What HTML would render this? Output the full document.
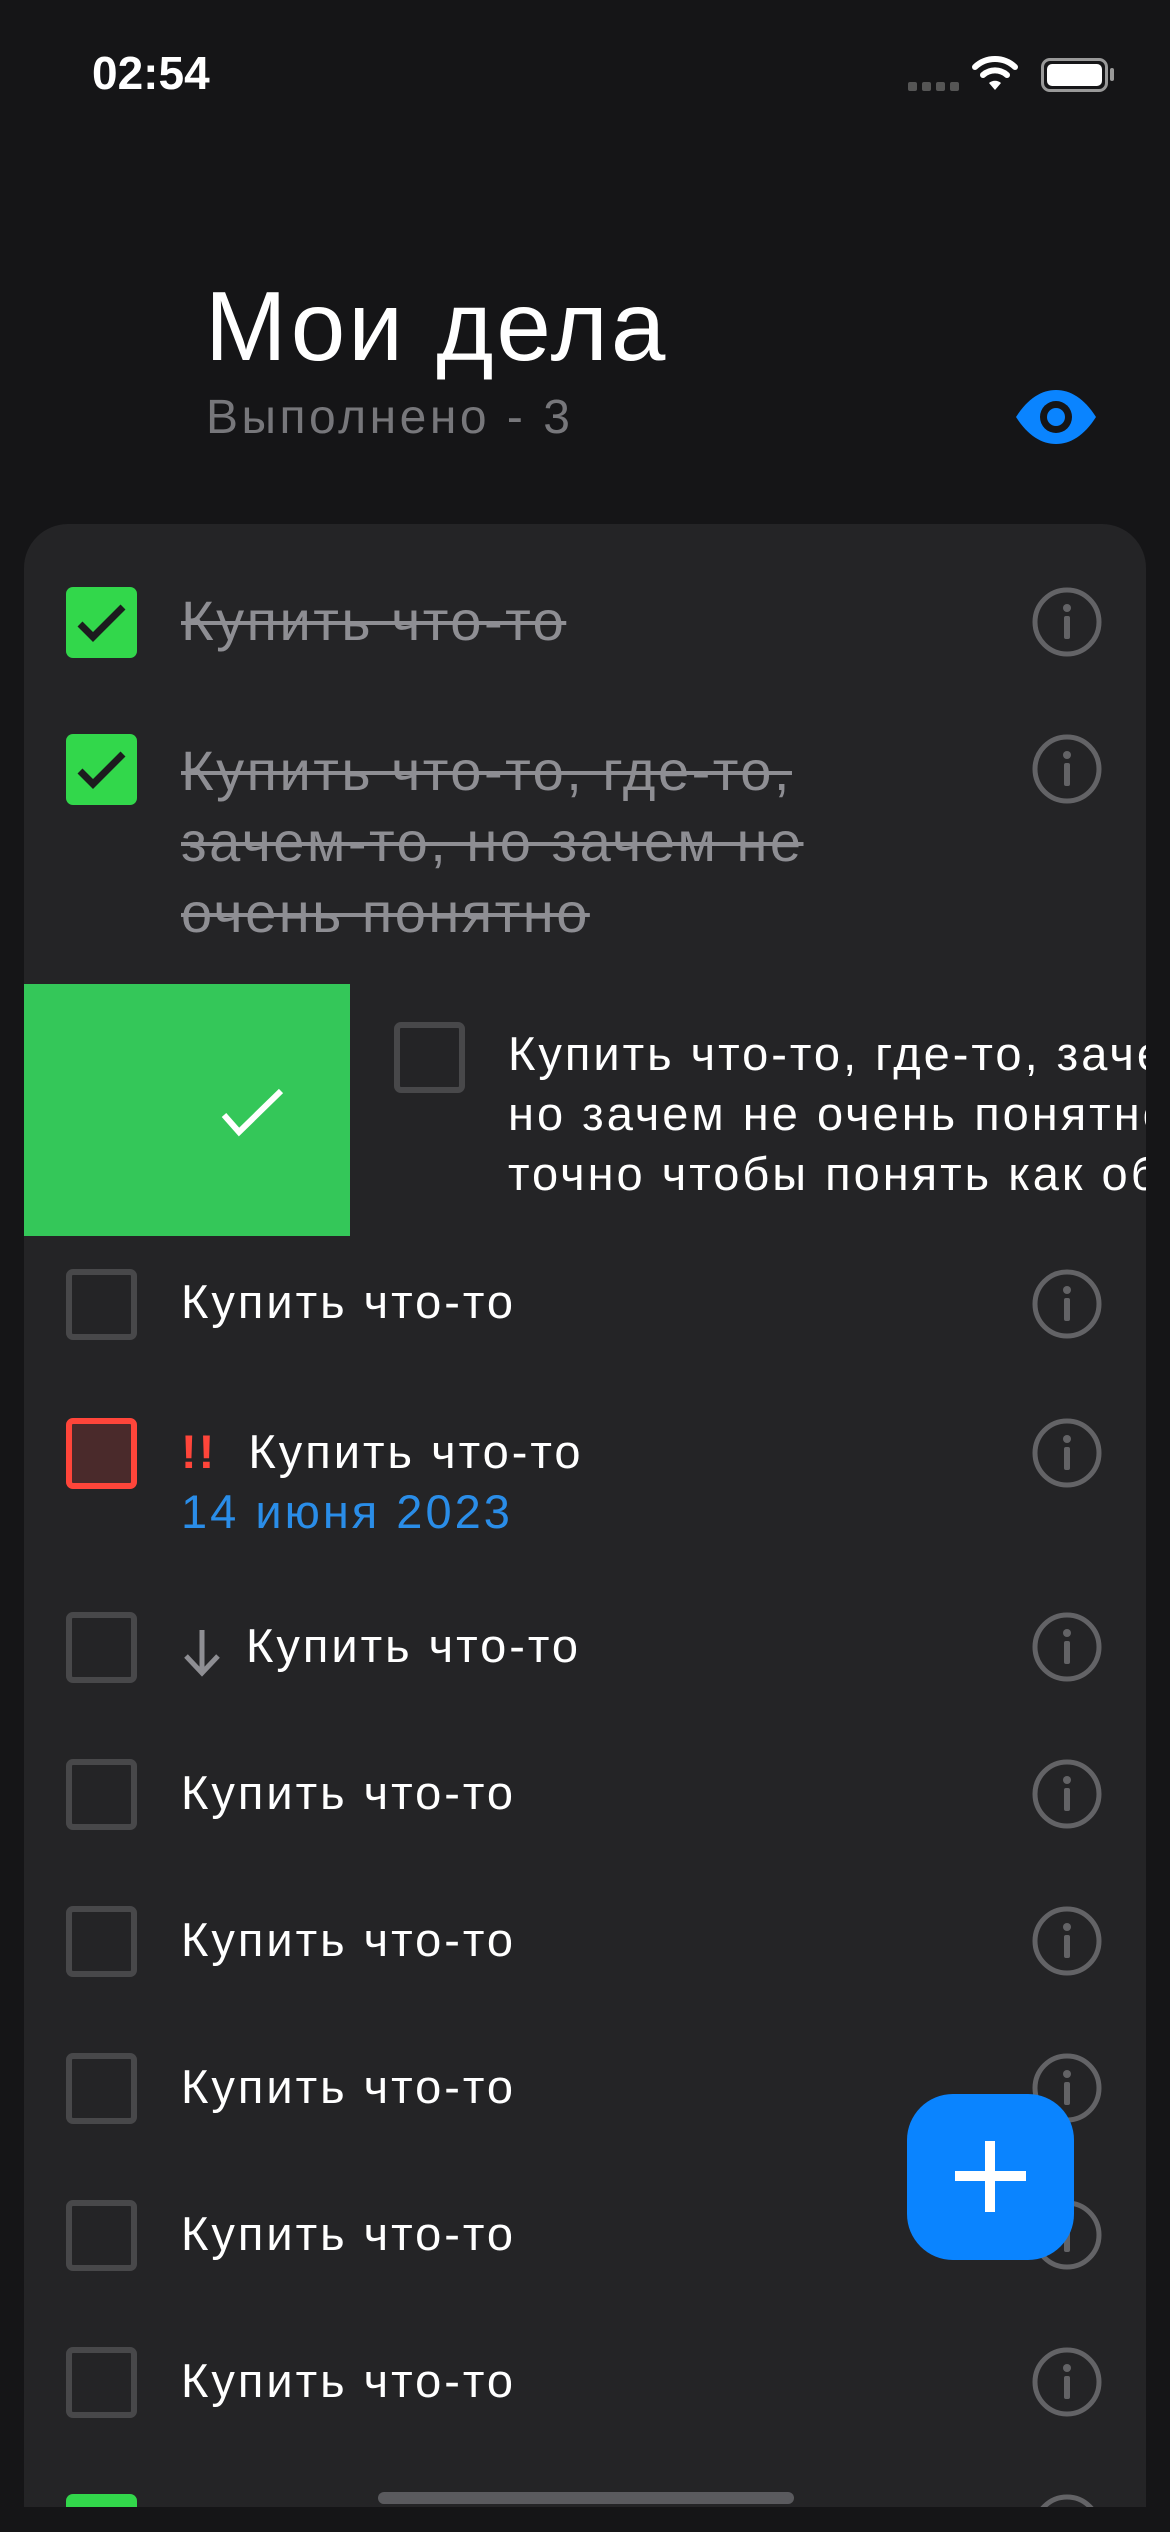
<!DOCTYPE html>
<html><head><meta charset="utf-8"><style>
*{margin:0;padding:0;box-sizing:border-box}
body{width:1170px;height:2532px;background:#151517;position:relative;overflow:hidden;font-family:"Liberation Sans","DejaVu Sans",sans-serif;color:#fff}
.a{position:absolute}
.card{position:absolute;left:24px;top:524px;width:1122px;height:1983px;background:#242426;border-radius:44px 44px 0 0;overflow:hidden}
.cb{position:absolute;width:71px;height:71px;border:6px solid #48484a;border-radius:7px}
.cbg{position:absolute;width:71px;height:71px;background:#32d74b;border-radius:7px}
.t{position:absolute;font-size:47px;white-space:nowrap;letter-spacing:3px;line-height:71px}
.s{color:#8e8e93;text-decoration:line-through;text-decoration-thickness:4px;font-size:56px;letter-spacing:2.5px}
.i{position:absolute;width:72px;height:72px}
</style></head><body>
<div class="a" style="left:92px;top:46px;font-size:46px;font-weight:bold">02:54</div>
<div class="a" style="left:908px;top:82px;width:52px;height:8px;display:flex;gap:5px"><span style="width:9px;height:9px;background:#555;border-radius:2px"></span><span style="width:9px;height:9px;background:#555;border-radius:2px"></span><span style="width:9px;height:9px;background:#555;border-radius:2px"></span><span style="width:9px;height:9px;background:#555;border-radius:2px"></span></div>
<svg class="a" style="left:972px;top:54px" width="46" height="38" viewBox="0 0 46 38"><path d="M3 13a29 29 0 0 1 40 0" stroke="#fff" stroke-width="6" fill="none" stroke-linecap="round"/><path d="M11 21a18 18 0 0 1 24 0" stroke="#fff" stroke-width="6" fill="none" stroke-linecap="round"/><path d="M17 29l6 7 6-7a9 9 0 0 0-12 0z" fill="#fff"/></svg>
<div class="a" style="left:1041px;top:58px;width:67px;height:34px;border:3px solid #999;border-radius:9px;padding:3px"><div style="width:100%;height:100%;background:#fff;border-radius:5px"></div></div>
<div class="a" style="left:1110px;top:68px;width:4px;height:13px;background:#999;border-radius:2px"></div>
<div class="a" style="left:205px;top:270px;font-size:98px;letter-spacing:3px">Мои дела</div>
<div class="a" style="left:206px;top:390px;font-size:48px;color:#77777b;letter-spacing:3.5px">Выполнено - 3</div>
<svg class="a" style="left:1014px;top:388px" width="84" height="58" viewBox="0 0 84 58"><path d="M2 29C14 10 28 2 42 2s28 8 40 27C70 48 56 56 42 56S14 48 2 29z" fill="#0a84ff"/><circle cx="42" cy="29" r="16" fill="#151517"/><circle cx="42" cy="29" r="9" fill="#0a84ff"/></svg>
<div class="card">
<svg width="0" height="0" style="position:absolute"><defs><g id="inf"><circle cx="36" cy="36" r="32" stroke="#636366" stroke-width="5" fill="none"/><circle cx="36" cy="22" r="4" fill="#636366"/><rect x="33" y="30" width="6" height="23" rx="2" fill="#636366"/></g><g id="ck"><path d="M14 37l13 13 30-30" stroke="#1c1c1e" stroke-width="7" fill="none"/></g></defs></svg>
<div class="cbg" style="left:42px;top:63px"><svg width="71" height="71"><use href="#ck"/></svg></div>
<div class="t s" style="left:157px;top:61px">Купить что-то</div>
<svg class="i" style="left:1007px;top:62px"><use href="#inf"/></svg>
<div class="cbg" style="left:42px;top:210px"><svg width="71" height="71"><use href="#ck"/></svg></div>
<div class="t s" style="left:157px;top:211px">Купить что-то, где-то,<br>зачем-то, но зачем не<br>очень понятно</div>
<svg class="i" style="left:1007px;top:209px"><use href="#inf"/></svg>
<div class="a" style="left:0;top:460px;width:326px;height:252px;background:#34c759"></div>
<svg class="a" style="left:196px;top:563px" width="65" height="50"><path d="M4 28l15 17 42-41" stroke="#fff" stroke-width="6" fill="none"/></svg>
<div class="cb" style="left:370px;top:498px"></div>
<div class="t" style="left:484px;top:500px;line-height:60px;letter-spacing:3px">Купить что-то, где-то, зачем-то,<br>но зачем не очень понятно, но<br>точно чтобы понять как обычно</div>
<div class="cb" style="left:42px;top:745px"></div><div class="t" style="left:157px;top:742px">Купить что-то</div><svg class="i" style="left:1007px;top:744px"><use href="#inf"/></svg>
<div class="cb" style="left:42px;top:894px;border-color:#ff453a;background:#4a2a2b"></div><div class="t" style="left:157px;top:892px"><span style="color:#ff453a;font-weight:bold;letter-spacing:2px">!!</span>&nbsp;&nbsp;Купить что-то</div><div class="t" style="left:157px;top:952px;color:#2a8de8">14 июня 2023</div><svg class="i" style="left:1007px;top:893px"><use href="#inf"/></svg>
<div class="cb" style="left:42px;top:1088px"></div><svg class="a" style="left:157px;top:1103px" width="44" height="50"><path d="M21 3v42M5 29l16 17 16-17" stroke="#8e8e93" stroke-width="5" fill="none"/></svg><div class="t" style="left:222px;top:1086px">Купить что-то</div><svg class="i" style="left:1007px;top:1087px"><use href="#inf"/></svg>
<div class="cb" style="left:42px;top:1235px"></div><div class="t" style="left:157px;top:1233px">Купить что-то</div><svg class="i" style="left:1007px;top:1234px"><use href="#inf"/></svg>
<div class="cb" style="left:42px;top:1382px"></div><div class="t" style="left:157px;top:1380px">Купить что-то</div><svg class="i" style="left:1007px;top:1381px"><use href="#inf"/></svg>
<div class="cb" style="left:42px;top:1529px"></div><div class="t" style="left:157px;top:1527px">Купить что-то</div><svg class="i" style="left:1007px;top:1528px"><use href="#inf"/></svg>
<div class="cb" style="left:42px;top:1676px"></div><div class="t" style="left:157px;top:1674px">Купить что-то</div><svg class="i" style="left:1007px;top:1675px"><use href="#inf"/></svg>
<div class="cb" style="left:42px;top:1823px"></div><div class="t" style="left:157px;top:1821px">Купить что-то</div><svg class="i" style="left:1007px;top:1822px"><use href="#inf"/></svg>
<div class="cbg" style="left:42px;top:1970px"></div><svg class="i" style="left:1007px;top:1969px"><use href="#inf"/></svg>
<div class="a" style="left:354px;top:1968px;width:416px;height:12px;background:#5a5a5e;border-radius:6px"></div>
</div>
<div class="a" style="left:907px;top:2094px;width:167px;height:166px;background:#0a84ff;border-radius:46px"></div>
<div class="a" style="left:955px;top:2171px;width:71px;height:10px;background:#fff"></div>
<div class="a" style="left:985px;top:2141px;width:10px;height:71px;background:#fff"></div>
</body></html>
